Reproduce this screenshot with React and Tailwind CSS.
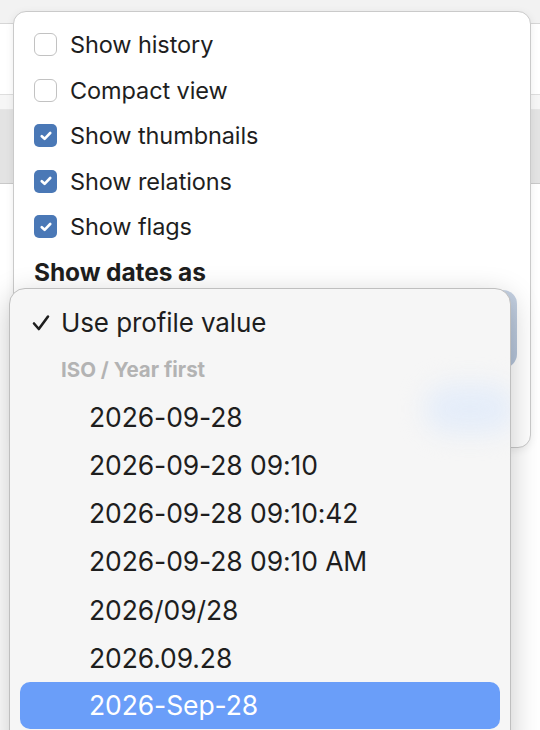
import React from "react";

const font = { fontFamily: "Inter, 'Noto Sans', sans-serif" };

function Box({ checked }) {
  return checked ? (
    <div className="w-[23px] h-[23px] rounded-[5px] bg-[#4a78b6] flex items-center justify-center shrink-0">
      <svg width="12" height="10" viewBox="0 0 12 10">
        <path d="M1.8 5.2 L4.6 7.8 L10.2 2" fill="none" stroke="white" strokeWidth="2.6" strokeLinecap="round" strokeLinejoin="round" />
      </svg>
    </div>
  ) : (
    <div className="w-[23px] h-[23px] rounded-[6px] border-[1.5px] border-[#c2c2c2] bg-white shrink-0" />
  );
}

const checks = [
  ["Show history", false],
  ["Compact view", false],
  ["Show thumbnails", true],
  ["Show relations", true],
  ["Show flags", true],
];

const dates = [
  "2026-09-28",
  "2026-09-28 09:10",
  "2026-09-28 09:10:42",
  "2026-09-28 09:10 AM",
  "2026/09/28",
  "2026.09.28",
];

export default function App() {
  return (
    <div className="relative w-[540px] h-[730px] overflow-hidden bg-white text-[#1e1e1e]" style={font}>
      {/* background page */}
      <div className="flex flex-col">
        <div className="h-[24px] bg-[#f2f2f2] border-b border-[#d6d6d6]" />
        <div className="h-[71px] bg-white border-b border-[#dedede]" />
        <div className="h-[15px] bg-[#f6f6f6] border-b border-[#e6e6e6]" />
        <div className="h-[74px] bg-[#e3e3e3] border-b border-[#c9c9c9]" />
        <div className="flex-1 bg-white" />
      </div>

      {/* popover */}
      <div className="absolute left-[13px] top-[11px] w-[518px] h-[437px] bg-white border border-[#cacaca] rounded-[13px] shadow-[0_2px_8px_rgba(0,0,0,0.08)] pt-[10px] px-[20px] flex flex-col">
        {checks.map(([label, c]) => (
          <div key={label} className="h-[45.5px] flex items-center gap-[13px]">
            <Box checked={c} />
            <span className="text-[23.5px] tracking-[-0.1px] leading-none">{label}</span>
          </div>
        ))}
        <div className="mt-[8px] h-[30px] flex items-center text-[24.5px] font-bold leading-none tracking-[-0.1px]">
          Show dates as
        </div>
        {/* select button peeking */}
        <div className="mt-[2px] self-end w-[75px] h-[78px] mr-[-7px] rounded-[14px] bg-gradient-to-b from-[#c6d2e3] to-[#b3c3d9]" />
      </div>

      {/* dropdown menu */}
      <div className="absolute left-[9px] top-[288px] w-[502px] h-[470px] rounded-[16px] bg-[#f6f6f6] border border-[#bfbfbf] shadow-[0_8px_30px_rgba(0,0,0,0.22)] overflow-hidden">
        <div className="absolute left-[415px] top-[95px] w-[90px] h-[50px] rounded-full bg-[#e5edf9] blur-md" />
        <div className="relative flex flex-col pt-[10px]">
          <div className="h-[48px] flex items-center">
            <div className="w-[51px] flex justify-end pr-[11px]">
              <svg width="18" height="18" viewBox="0 0 18 18">
                <path d="M2 9.5 L6.8 15 L16 2.5" fill="none" stroke="#1e1e1e" strokeWidth="2.6" strokeLinecap="round" strokeLinejoin="round" />
              </svg>
            </div>
            <span className="text-[26px] leading-none tracking-[-0.1px]">Use profile value</span>
          </div>
          <div className="h-[46px] flex items-center pl-[51px] text-[20.5px] font-bold text-[#b3b3b3] leading-none">
            ISO / Year first
          </div>
          {dates.map((d) => (
            <div key={d} className="h-[48.2px] flex items-center pl-[79px] text-[26.5px] leading-none tracking-[-0.1px]">
              {d}
            </div>
          ))}
          <div className="mx-[10px] h-[47px] rounded-[10px] bg-[#6a9ef9] flex items-center pl-[69px] text-[26.5px] leading-none text-white tracking-[-0.1px]">
            2026-Sep-28
          </div>
        </div>
      </div>
    </div>
  );
}
